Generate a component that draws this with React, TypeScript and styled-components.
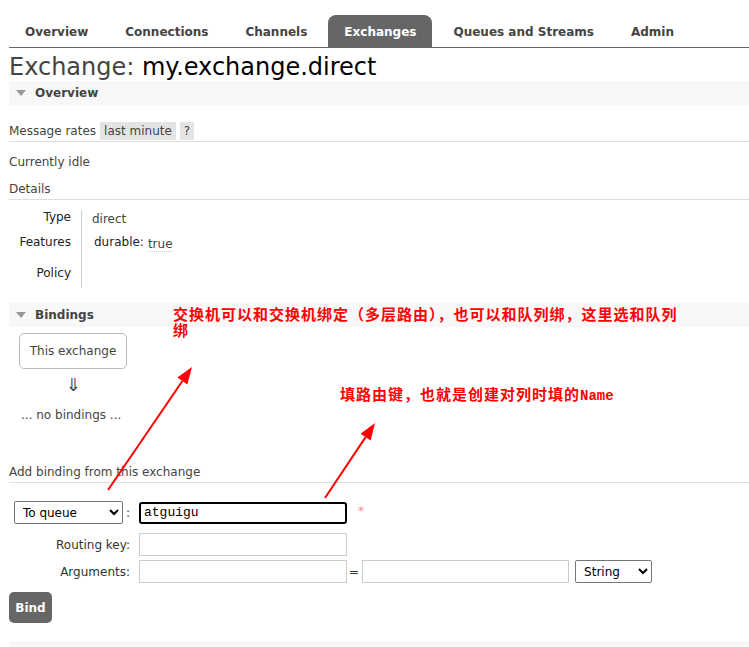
import React from "react";
import styled, { createGlobalStyle } from "styled-components";

const Global = createGlobalStyle`
  html, body { margin: 0; padding: 0; background: #fff; }
  body { font-family: "DejaVu Sans", Verdana, sans-serif; font-size: 12px; color: #444; }
  * { box-sizing: border-box; }
`;

const Page = styled.div`
  position: relative;
  width: 749px;
  height: 647px;
  overflow: hidden;
  padding: 15px 0 0 9px;
`;

const Tabs = styled.ul`
  display: flex;
  gap: 5px;
  margin: 0;
  padding: 0;
  list-style: none;
  border-bottom: 1px solid #666;
  height: 33px;
`;

const Tab = styled.li<{ $active?: boolean }>`
  display: flex;
  align-items: center;
  height: 32px;
  padding: 1px 16px 0 16px;
  font-weight: bold;
  font-size: 12px;
  color: ${(p) => (p.$active ? "#fff" : "#444")};
  background: ${(p) => (p.$active ? "#666" : "transparent")};
  border-radius: 8px 8px 0 0;
`;

const Title = styled.h1`
  margin: 5px 0 0 0;
  font-weight: normal;
  font-size: 24px;
  line-height: 28px;
  height: 28px;
  color: #444;
  span { color: #000; }
`;

const SectionHead = styled.div<{ $top?: number }>`
  display: flex;
  align-items: center;
  height: 24px;
  margin-top: ${(p) => p.$top ?? 0}px;
  background: #f8f8f8;
  font-weight: bold;
  font-size: 12px;
  color: #444;
  gap: 9px;
  padding-left: 7px;
`;

const Tri = styled.span`
  width: 0;
  height: 0;
  border-left: 5px solid transparent;
  border-right: 5px solid transparent;
  border-top: 6px solid #999;
`;

const RateRow = styled.div`
  display: flex;
  align-items: center;
  margin-top: 17px;
  gap: 4px;
  border-bottom: 1px solid #ddd;
  height: 20px;
  padding-bottom: 1px;
`;

const Pill = styled.span`
  background: #e4e4e4;
  padding: 2px 4px;
  line-height: 14px;
  color: #444;
`;

const Plain = styled.div<{ $top: number }>`
  margin-top: ${(p) => p.$top}px;
  line-height: 14px;
`;

const SubHead = styled.div<{ $top: number }>`
  margin-top: ${(p) => p.$top}px;
  line-height: 14px;
  padding-bottom: 3px;
  border-bottom: 1px solid #ddd;
`;

const Details = styled.div`
  display: grid;
  grid-template-columns: 73px 1fr;
  margin-top: 10px;
  width: 300px;
`;

const Labels = styled.div`
  display: flex;
  flex-direction: column;
  align-items: flex-end;
  padding-right: 10px;
  border-right: 1px solid #ccc;
  height: 78px;
  color: #222;
`;

const Values = styled.div`
  display: flex;
  flex-direction: column;
  padding-left: 10px;
`;

const Cell = styled.div<{ $h: number; $pad?: number }>`
  height: ${(p) => p.$h}px;
  line-height: 14px;
  padding-top: ${(p) => p.$pad ?? 0}px;
`;

const FeatureCell = styled(Cell)`
  padding-left: 2px;
  color: #222;
`;

const Dotted = styled.span`
  border-bottom: 1px dotted #ccc;
  margin-left: 4px;
  color: #444;
  position: relative;
  top: 2px;
`;

const ExBox = styled.div`
  margin: 6px 0 0 10px;
  width: 108px;
  height: 36px;
  border: 1px solid #bbb;
  border-radius: 5px;
  display: flex;
  align-items: center;
  justify-content: center;
`;

const DownArrow = styled.div`
  width: 108px;
  margin-left: 10px;
  text-align: center;
  font-size: 18px;
  line-height: 20px;
  margin-top: 6px;
  color: #444;
`;

const NoBind = styled.div`
  margin: 13px 0 0 12px;
  line-height: 14px;
`;

const Form = styled.div`
  display: flex;
  flex-direction: column;
  margin-top: 18px;
`;

const Row = styled.div<{ $top: number }>`
  display: flex;
  align-items: center;
  margin-top: ${(p) => p.$top}px;
  height: 23px;
`;

const LabelCell = styled.div`
  width: 121px;
  display: flex;
  align-items: center;
  justify-content: flex-end;
  color: #333;
  font-size: 12px;
  gap: 3px;
`;

const NativeSelect = styled.select<{ $w: number }>`
  width: ${(p) => p.$w}px;
  height: 23px;
  font-family: "DejaVu Sans", sans-serif;
  font-size: 12px;
  color: #000;
  border: 1px solid #767676;
  border-radius: 2px;
  background: #fff;
  padding: 0 4px;
`;

const TextBox = styled.input<{ $focus?: boolean }>`
  width: 208px;
  height: ${(p) => (p.$focus ? 22 : 23)}px;
  margin-left: 9px;
  border: ${(p) => (p.$focus ? "2px solid #000" : "1px solid #ccc")};
  border-radius: ${(p) => (p.$focus ? 3 : 0)}px;
  font-family: "Liberation Mono", monospace;
  font-size: 13px;
  color: #000;
  padding: 0 3px;
  outline: none;
  background: #fff;
`;

const Star = styled.span`
  color: #f88;
  margin-left: 11px;
  font-size: 12px;
  position: relative;
  top: -2px;
`;

const Eq = styled.span`
  margin: 0 3px 0 2px;
  color: #333;
`;

const Small = styled(TextBox)`
  margin-left: 0;
  width: 207px;
`;

const SelectGap = styled.span`
  width: 6px;
`;

const BindBtn = styled.button`
  margin-top: 9px;
  width: 43px;
  height: 31px;
  background: #666;
  color: #fff;
  border: none;
  border-radius: 5px;
  font-family: "DejaVu Sans", sans-serif;
  font-weight: bold;
  font-size: 12px;
  padding: 0;
`;

const Footer = styled.div`
  margin-top: 18px;
  height: 10px;
  background: #f8f8f8;
`;

const Note = styled.div<{ $x: number; $y: number }>`
  position: absolute;
  left: ${(p) => p.$x}px;
  top: ${(p) => p.$y}px;
  color: #f00;
  font-family: "Noto Sans CJK SC", sans-serif;
  font-weight: bold;
  font-size: 15px;
  letter-spacing: 1px;
  line-height: 16px;
  white-space: nowrap;
`;

const Mono = styled.span`
  font-family: "Liberation Mono", monospace;
  font-size: 14px;
  letter-spacing: 0;
`;

const Overlay = styled.svg`
  position: absolute;
  left: 0;
  top: 0;
  pointer-events: none;
`;

export default function App() {
  return (
    <>
      <Global />
      <Page>
        <Tabs>
          <Tab>Overview</Tab>
          <Tab>Connections</Tab>
          <Tab>Channels</Tab>
          <Tab $active>Exchanges</Tab>
          <Tab>Queues and Streams</Tab>
          <Tab>Admin</Tab>
        </Tabs>
        <Title>
          Exchange: <span>my.exchange.direct</span>
        </Title>
        <SectionHead>
          <Tri />
          Overview
        </SectionHead>
        <RateRow>
          <span>Message rates</span>
          <Pill>last minute</Pill>
          <Pill>?</Pill>
        </RateRow>
        <Plain $top={13}>Currently idle</Plain>
        <SubHead $top={13}>Details</SubHead>
        <Details>
          <Labels>
            <Cell $h={25} $pad={0}>Type</Cell>
            <Cell $h={31} $pad={0}>Features</Cell>
            <Cell $h={22} $pad={0}>Policy</Cell>
          </Labels>
          <Values>
            <Cell $h={25} $pad={2}>direct</Cell>
            <FeatureCell $h={30} $pad={0}>
              durable:<Dotted>true</Dotted>
            </FeatureCell>
          </Values>
        </Details>
        <SectionHead $top={15}>
          <Tri />
          Bindings
        </SectionHead>
        <ExBox>This exchange</ExBox>
        <DownArrow>⇓</DownArrow>
        <NoBind>... no bindings ...</NoBind>
        <SubHead $top={43}>Add binding from this exchange</SubHead>
        <Form>
          <Row $top={0}>
            <LabelCell>
              <NativeSelect $w={109} defaultValue="q">
                <option value="q">To queue</option>
                <option value="e">To exchange</option>
              </NativeSelect>
              :
            </LabelCell>
            <TextBox $focus defaultValue="atguigu" />
            <Star>*</Star>
          </Row>
          <Row $top={9}>
            <LabelCell>Routing key:</LabelCell>
            <TextBox />
          </Row>
          <Row $top={4}>
            <LabelCell>Arguments:</LabelCell>
            <TextBox />
            <Eq>=</Eq>
            <Small />
            <SelectGap />
            <NativeSelect $w={77} defaultValue="s">
              <option value="s">String</option>
              <option value="n">Number</option>
            </NativeSelect>
          </Row>
          <div>
            <BindBtn>Bind</BindBtn>
          </div>
        </Form>
        <Footer />
        <Note $x={173} $y={306}>
          交换机可以和交换机绑定（多层路由），也可以和队列绑，这里选和队列
          <br />绑
        </Note>
        <Note $x={340} $y={386}>
          填路由键，也就是创建对列时填的<Mono>Name</Mono>
        </Note>
        <Overlay width={749} height={647} viewBox="0 0 749 647">
          <line x1={108} y1={490} x2={182.4} y2={381} stroke="#f00" strokeWidth={2} />
          <polygon points="192,367 187.4,384.4 177.4,377.6" fill="#f00" />
          <line x1={325} y1={498} x2={365.6} y2={437.1} stroke="#f00" strokeWidth={2} />
          <polygon points="375,423 370.6,440.4 360.6,433.8" fill="#f00" />
        </Overlay>
      </Page>
    </>
  );
}
